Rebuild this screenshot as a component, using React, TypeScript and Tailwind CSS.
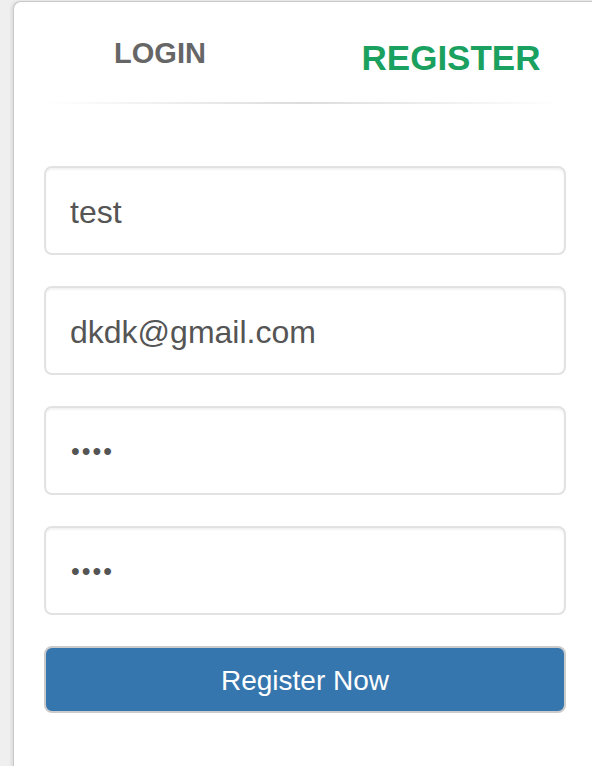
import React from 'react';

const fields = [
  { type: 'text', value: 'test' },
  { type: 'text', value: 'dkdk@gmail.com' },
  { type: 'password', value: 'test' },
  { type: 'password', value: 'test' },
];

export default function App() {
  return (
    <div className="h-[766px] w-[592px] overflow-hidden bg-[#efefef] pt-px pl-[13px] font-['Liberation_Sans',Arial,sans-serif]">
      <div className="h-[800px] w-[620px] rounded-tl-[8px] border-l border-t border-[#c9c9c9] bg-white shadow-[-2px_0_3px_rgba(0,0,0,0.08)]">
        {/* Tabs */}
        <div className="flex h-[100px]">
          <div className="w-[292px] pt-[37px] text-center text-[29px] font-bold leading-none text-[#666]">LOGIN</div>
          <div className="w-[290px] pt-[38px] text-center text-[35px] font-bold leading-none text-[#1aa05f]">REGISTER</div>
        </div>
        <div className="ml-[31px] h-[2px] w-[516px] bg-[linear-gradient(to_right,rgba(221,221,221,0),#dcdcdc_50%,rgba(221,221,221,0))]" />

        {/* Form */}
        <div className="ml-[30px] flex w-[522px] flex-col gap-[31px] pt-[62px]">
          {fields.map((f, i) => (
            <input
              key={i}
              type={f.type}
              defaultValue={f.value}
              readOnly
              className={
                f.type === 'password'
                  ? 'h-[89px] w-full rounded-[8px] border-2 border-[#e2e2e2] bg-white px-[25px] pt-[2px] text-[25px] tracking-[2px] text-[#555] shadow-[inset_0_2px_2px_rgba(0,0,0,0.05)] outline-none'
                  : 'h-[89px] w-full rounded-[8px] border-2 border-[#e2e2e2] bg-white px-[24px] pt-[4px] text-[32px] text-[#555] shadow-[inset_0_2px_2px_rgba(0,0,0,0.05)] outline-none'
              }
            />
          ))}
          <button className="h-[67px] w-full rounded-[8px] border-2 border-[#cbcbcb] bg-[#3676ae] pt-[2px] text-[28px] text-white">
            Register Now
          </button>
        </div>
      </div>
    </div>
  );
}
